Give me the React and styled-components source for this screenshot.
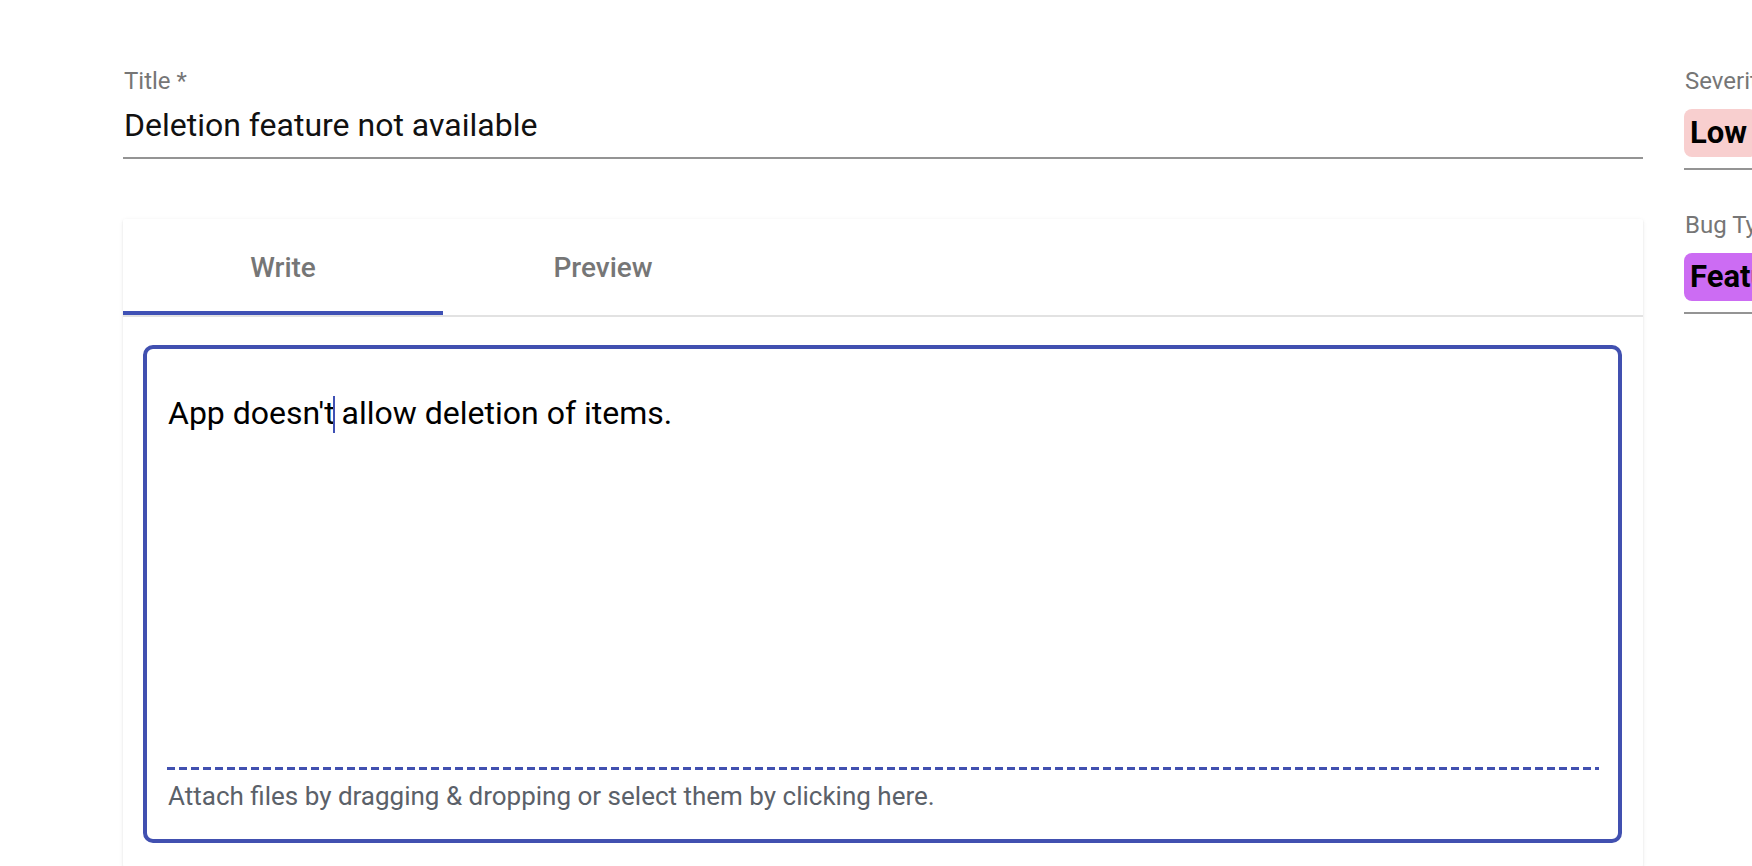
import React from "react";
import styled, { createGlobalStyle } from "styled-components";

const GlobalStyle = createGlobalStyle`
  html, body {
    margin: 0;
    padding: 0;
    background: #ffffff;
    overflow: hidden;
  }
  body {
    font-family: Roboto, "Noto Sans", "Liberation Sans", sans-serif;
    -webkit-font-smoothing: antialiased;
  }
  * { box-sizing: border-box; }
`;

const Page = styled.div`
  width: 100vw;
  height: 866px;
  overflow: hidden;
  display: flex;
  align-items: flex-start;
  gap: 41px;
  padding: 69px 0 0 123px;
`;

const Main = styled.div`
  flex: 0 0 1520px;
  display: flex;
  flex-direction: column;
`;

const Side = styled.div`
  flex: 0 0 320px;
  display: flex;
  flex-direction: column;
  gap: 43px;
`;

const Field = styled.div`
  display: flex;
  flex-direction: column;
`;

const Label = styled.div`
  font-size: 24px;
  line-height: 24px;
  color: #767676;
  padding-left: 1px;
  white-space: nowrap;
`;

const TitleInput = styled.div`
  margin-top: 13px;
  font-size: 32px;
  line-height: 38px;
  color: #111111;
  padding: 0 0 13px 1px;
  border-bottom: 2px solid #949494;
`;

const ChipRow = styled.div`
  margin-top: 16px;
  padding-bottom: 11px;
  border-bottom: 2px solid #949494;
  white-space: nowrap;
`;

const Chip = styled.span`
  display: inline-flex;
  align-items: center;
  height: 48px;
  padding: 0 10px 0 6px;
  border-radius: 8px;
  background: ${(p) => p.$bg};
  color: #000;
  font-size: 31px;
  font-weight: 700;
  line-height: 48px;
`;

const Card = styled.div`
  margin-top: 60px;
  background: #fff;
  border-radius: 2px;
  box-shadow: 0 2px 2px -1px rgba(0, 0, 0, 0.12), 0 1px 2px rgba(0, 0, 0, 0.08),
    0 1px 5px rgba(0, 0, 0, 0.06);
`;

const TabBar = styled.div`
  display: flex;
  border-bottom: 2px solid #e2e2e2;
`;

const Tab = styled.div`
  position: relative;
  width: 320px;
  height: 96px;
  display: flex;
  align-items: center;
  justify-content: center;
  font-size: 28px;
  font-weight: 500;
  color: #767676;
  &::after {
    content: "";
    display: ${(p) => (p.$active ? "block" : "none")};
    position: absolute;
    left: 0;
    right: 0;
    bottom: 0;
    height: 4px;
    background: #3f51b5;
  }
`;

const CardBody = styled.div`
  padding: 28px 21px 24px 20px;
`;

const Editor = styled.div`
  height: 498px;
  border: 4px solid #4150b0;
  border-radius: 10px;
  display: flex;
  flex-direction: column;
`;

const EditorText = styled.div`
  flex: 1;
  padding: 40px 20px 0 21px;
  font-size: 32px;
  line-height: 48px;
  color: #000;
`;

const Caret = styled.span`
  display: inline-block;
  width: 2px;
  height: 37px;
  margin: 0 -1px 0 -2px;
  vertical-align: -9px;
  background: #3f51b5;
`;

const Dash = styled.div`
  height: 3px;
  margin: 0 19px 8px 20px;
  background-image: repeating-linear-gradient(
    to right,
    #4150b0 0 8px,
    transparent 8px 12px
  );
`;

const AttachText = styled.div`
  padding: 0 20px 25px 21px;
  font-size: 26px;
  line-height: 36px;
  color: #5b6169;
`;

export default function App() {
  return (
    <>
      <GlobalStyle />
      <Page>
        <Main>
          <Field>
            <Label>Title *</Label>
            <TitleInput>Deletion feature not available</TitleInput>
          </Field>
          <Card>
            <TabBar>
              <Tab $active>Write</Tab>
              <Tab>Preview</Tab>
            </TabBar>
            <CardBody>
              <Editor>
                <EditorText>
                  App doesn't<Caret /> allow deletion of items.
                </EditorText>
                <Dash />
                <AttachText>
                  Attach files by dragging &amp; dropping or select them by clicking here.
                </AttachText>
              </Editor>
            </CardBody>
          </Card>
        </Main>
        <Side>
          <Field>
            <Label>Severity</Label>
            <ChipRow>
              <Chip $bg="#f8cfcf">Low</Chip>
            </ChipRow>
          </Field>
          <Field>
            <Label>Bug Type</Label>
            <ChipRow>
              <Chip $bg="#cc6cf3">Feature</Chip>
            </ChipRow>
          </Field>
        </Side>
      </Page>
    </>
  );
}
